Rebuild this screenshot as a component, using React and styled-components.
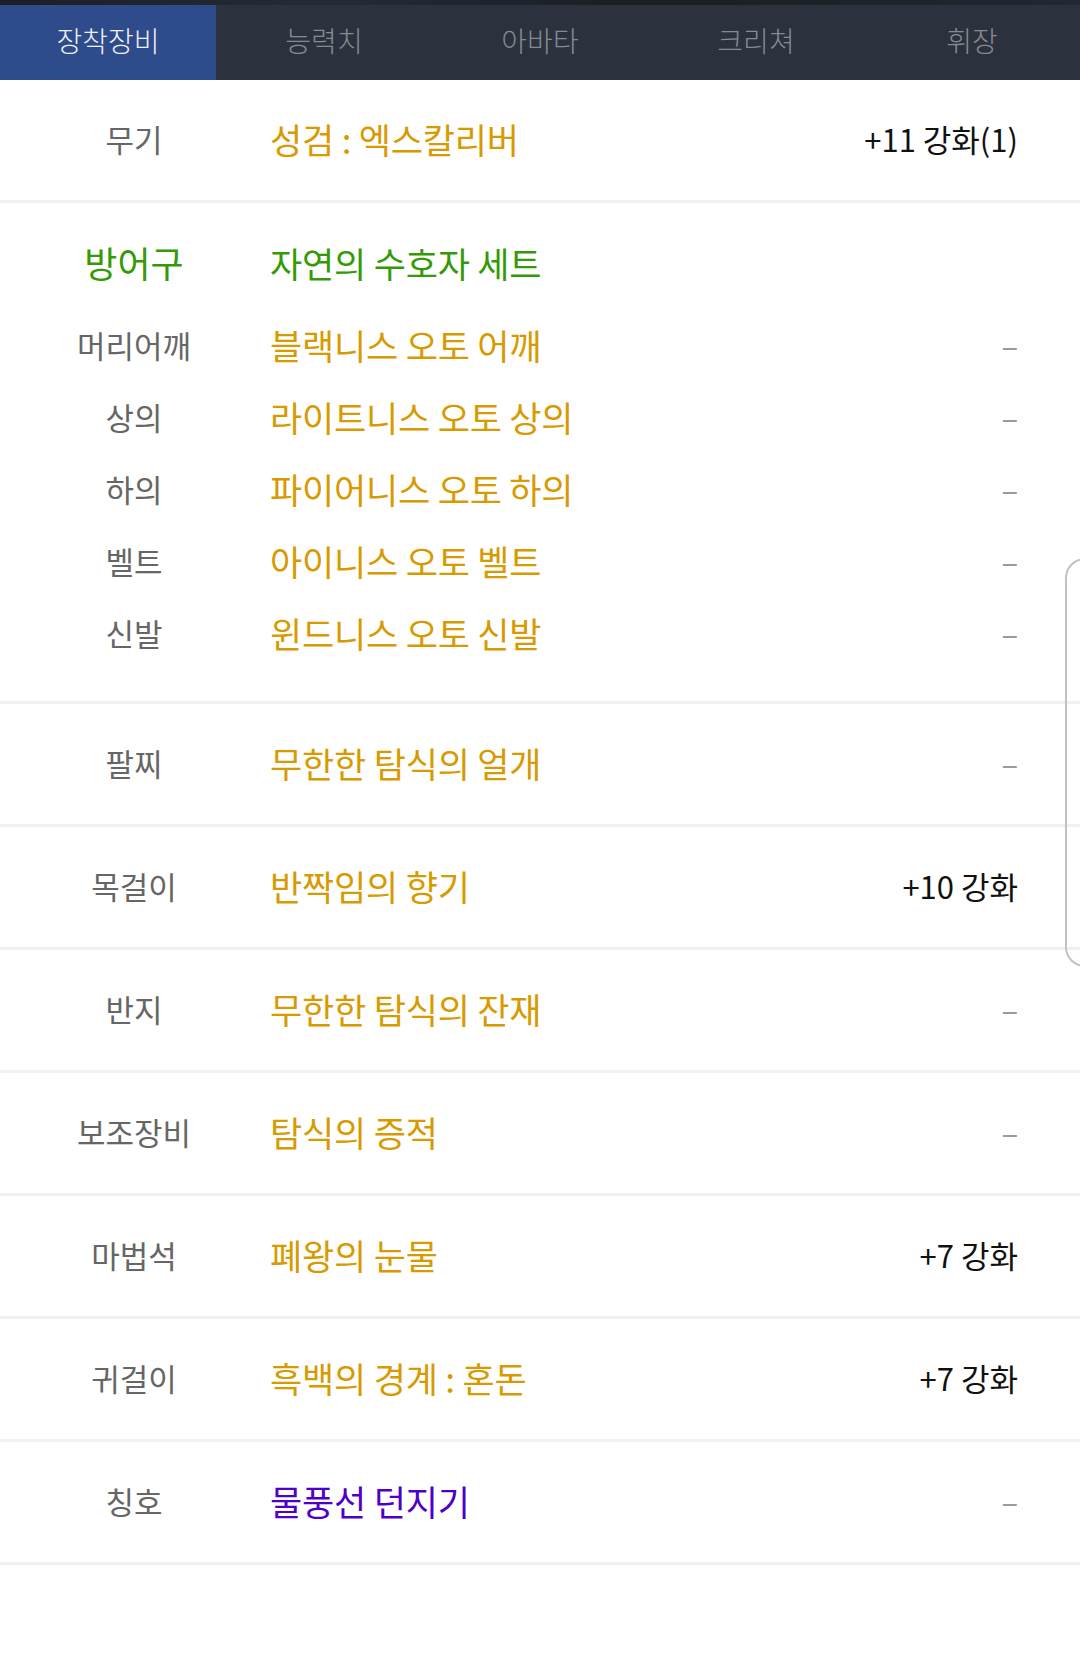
import React from 'react'
import styled, { createGlobalStyle } from 'styled-components'

const GlobalStyle = createGlobalStyle`
    html, body {
        margin: 0;
        padding: 0;
        background: #ffffff;
    }
    body {
        font-family: "Noto Sans CJK KR", "Noto Sans", sans-serif;
        -webkit-font-smoothing: antialiased;
    }
`

const GOLD = '#d79a00'
const GREEN = '#349a06'
const PURPLE = '#5000c6'

const Page = styled.div`
    position: relative;
    width: 1080px;
    min-height: 1657px;
    background: #ffffff;
    overflow: hidden;
`

const HeaderStrip = styled.div`
    height: 5px;
    background: linear-gradient(90deg, #1b1e25, #262a33 30%, #1a1d24 60%, #23272f);
`

const TabBar = styled.nav`
    display: grid;
    grid-template-columns: repeat(5, 1fr);
    height: 75px;
    background: #2c323d;
`

const Tab = styled.div`
    display: flex;
    align-items: center;
    justify-content: center;
    padding-bottom: 6px;
    font-size: 28px;
    font-weight: 300;
    color: ${ props => props.active ? '#eef0f6' : '#858a93' };
    background: ${ props => props.active ? '#2e4b8c' : 'transparent' };
`

const List = styled.div`
    display: flex;
    flex-direction: column;
`

const Row = styled.div`
    display: grid;
    grid-template-columns: 268px 1fr auto;
    column-gap: 2px;
    align-items: center;
    height: 120px;
    padding-right: 62px;
    border-bottom: 3px solid #f1f1f1;
`

const ArmorBlock = styled.div`
    display: flex;
    flex-direction: column;
    padding: 25px 62px 31px 0;
    border-bottom: 3px solid #f1f1f1;
`

const SubRow = styled.div`
    display: grid;
    grid-template-columns: 268px 1fr auto;
    column-gap: 2px;
    align-items: center;
    height: 72px;
    margin-bottom: ${ props => props.head ? '10px' : '0' };
`

const Label = styled.div`
    text-align: center;
    font-size: ${ props => props.big ? '36px' : '31px' };
    color: ${ props => props.color || '#666666' };
    line-height: 1;
    padding-bottom: 4px;
`

const ItemName = styled.div`
    font-size: 35px;
    color: ${ props => props.color || GOLD };
    letter-spacing: -0.2px;
    line-height: 1;
    white-space: nowrap;
    padding-bottom: 4px;
`

const Value = styled.div`
    text-align: right;
    font-size: 31px;
    color: ${ props => props.dash ? '#9a9a9a' : '#111111' };
    line-height: 1;
    white-space: nowrap;
    padding-bottom: 4px;
`

const EdgeHandle = styled.div`
    position: absolute;
    left: 1065px;
    top: 558px;
    width: 40px;
    height: 405px;
    border: 2px solid #c2c2c2;
    border-right: none;
    border-radius: 20px 0 0 20px;
    pointer-events: none;
`

const tabs = ['장착장비', '능력치', '아바타', '크리쳐', '휘장']

const armor = [
    { label: '머리어깨', name: '블랙니스 오토 어깨' },
    { label: '상의', name: '라이트니스 오토 상의' },
    { label: '하의', name: '파이어니스 오토 하의' },
    { label: '벨트', name: '아이니스 오토 벨트' },
    { label: '신발', name: '윈드니스 오토 신발' },
]

const accessories = [
    { label: '팔찌', name: '무한한 탐식의 얼개' },
    { label: '목걸이', name: '반짝임의 향기', value: '+10 강화' },
    { label: '반지', name: '무한한 탐식의 잔재' },
    { label: '보조장비', name: '탐식의 증적' },
    { label: '마법석', name: '폐왕의 눈물', value: '+7 강화' },
    { label: '귀걸이', name: '흑백의 경계 : 혼돈', value: '+7 강화' },
    { label: '칭호', name: '물풍선 던지기', color: PURPLE },
]

const ValueCell = ({ value }) => (
    value ? <Value>{ value }</Value> : <Value dash>–</Value>
)

export default function App() {
    return (
        <Page>
            <GlobalStyle />
            <HeaderStrip />
            <TabBar>
                { tabs.map((t, i) => <Tab key={ t } active={ i === 0 }>{ t }</Tab>) }
            </TabBar>
            <List>
                <Row>
                    <Label>무기</Label>
                    <ItemName>성검 : 엑스칼리버</ItemName>
                    <Value>+11 강화(1)</Value>
                </Row>
                <ArmorBlock>
                    <SubRow head>
                        <Label big color={ GREEN }>방어구</Label>
                        <ItemName color={ GREEN }>자연의 수호자 세트</ItemName>
                        <span />
                    </SubRow>
                    { armor.map(a => (
                        <SubRow key={ a.label }>
                            <Label>{ a.label }</Label>
                            <ItemName>{ a.name }</ItemName>
                            <ValueCell value={ a.value } />
                        </SubRow>
                    )) }
                </ArmorBlock>
                { accessories.map(a => (
                    <Row key={ a.label }>
                        <Label>{ a.label }</Label>
                        <ItemName color={ a.color }>{ a.name }</ItemName>
                        <ValueCell value={ a.value } />
                    </Row>
                )) }
            </List>
            <EdgeHandle />
        </Page>
    )
}
